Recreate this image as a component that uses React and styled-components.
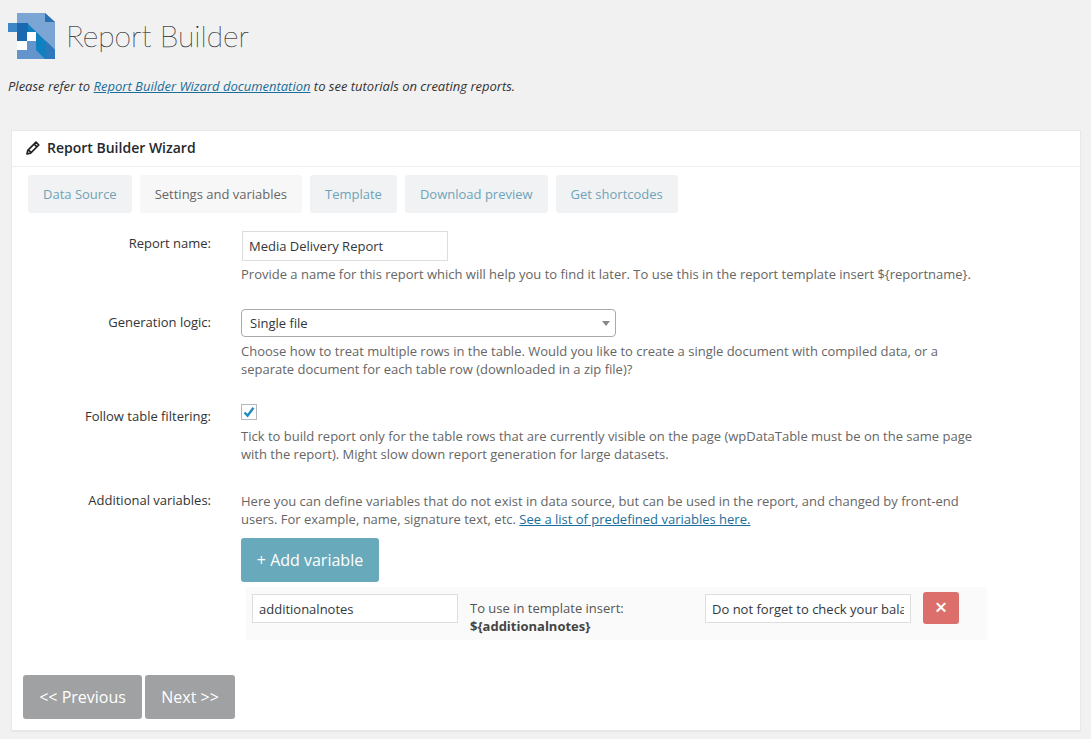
import React from 'react';
import styled, { createGlobalStyle } from 'styled-components';

const GlobalStyle = createGlobalStyle`
  html, body {
    margin: 0;
    padding: 0;
    background: #f1f1f1;
    font-family: 'Open Sans', 'Liberation Sans', sans-serif;
    font-size: 13px;
    color: #444;
  }
`;

const tabs = ['Data Source', 'Settings and variables', 'Template', 'Download preview', 'Get shortcodes'];

const Logo = () => (
  <svg width="48" height="48" viewBox="0 0 48 48">
    <polygon points="9,0 37,0 47,9 47,46 9,46" fill="#7aa5d4" />
    <polygon points="37,0 47,9 37,9" fill="#2a70b5" />
    <polygon points="9,28 19,28 28,28 47,46 9,46" fill="#6394cc" />
    <polygon points="19,10 47,37 47,46 37,46 28,37 28,19 19,19" fill="#0f80c0" />
    <polygon points="38,28 47,37 47,46 38,46" fill="#2c78ba" />
    <rect x="0" y="10" width="10" height="9" fill="#3f86c6" />
    <rect x="9" y="10" width="11" height="18" fill="#1c68b0" />
    <rect x="19" y="19" width="9" height="9" fill="#ffffff" />
    <rect x="9" y="28" width="10" height="9" fill="#ffffff" />
  </svg>
);

const Pencil = () => (
  <svg width="14" height="14" viewBox="0 0 14 14">
    <path
      d="M10 1.2 12.8 4 4.6 12.2 1 13l.8-3.6zM8.7 3.6l1.7 1.7M3 9.4l1.6 1.6"
      fill="none"
      stroke="#222"
      strokeWidth="1.7"
      strokeLinejoin="round"
    />
  </svg>
);

const App = () => (
  <Page>
    <GlobalStyle />
    <Header>
      <Logo />
      <Title>Report Builder</Title>
    </Header>
    <Intro>
      Please refer to <IntroLink href="#">Report Builder Wizard documentation</IntroLink> to see tutorials on creating reports.
    </Intro>
    <Panel>
      <PanelHeader>
        <Pencil />
        <PanelTitle>Report Builder Wizard</PanelTitle>
      </PanelHeader>
      <TabBar>
        {tabs.map((t, i) => (
          <Tab key={t} $active={i === 1}>{t}</Tab>
        ))}
      </TabBar>
      <Form>
        <Row $height={78}>
          <Label $offset={3}>Report name:</Label>
          <Field>
            <NameInput defaultValue="Media Delivery Report" />
            <Help $top={4}>
              Provide a name for this report which will help you to find it later. To use this in the report template insert ${'{'}reportname{'}'}.
            </Help>
          </Field>
        </Row>
        <Row $height={91}>
          <Label $offset={4}>Generation logic:</Label>
          <Field>
            <SelectWrap>
              <Select defaultValue="Single file">
                <option>Single file</option>
              </Select>
              <Arrow />
            </SelectWrap>
            <Help $top={5}>
              Choose how to treat multiple rows in the table. Would you like to create a single document with compiled data, or a separate document for each table row (downloaded in a zip file)?
            </Help>
          </Field>
        </Row>
        <Row $height={92}>
          <Label $offset={7}>Follow table filtering:</Label>
          <Field>
            <CheckBox>
              <svg width="14" height="14" viewBox="0 0 14 14">
                <path d="M2.5 7.5 5.6 10.6 11.5 2.8" fill="none" stroke="#1e8cbe" strokeWidth="2.4" />
              </svg>
            </CheckBox>
            <Help $top={7}>
              Tick to build report only for the table rows that are currently visible on the page (wpDataTable must be on the same page with the report). Might slow down report generation for large datasets.
            </Help>
          </Field>
        </Row>
        <Row>
          <Label $offset={-1}>Additional variables:</Label>
          <Field>
            <Help $top={0}>
              Here you can define variables that do not exist in data source, but can be used in the report, and changed by front-end users. For example, name, signature text, etc. <HelpLink href="#">See a list of predefined variables here.</HelpLink>
            </Help>
            <AddButton>+ Add variable</AddButton>
            <VariableRow>
              <VarInput defaultValue="additionalnotes" />
              <InsertNote>
                To use in template insert:
                <br />
                <strong>${'{'}additionalnotes{'}'}</strong>
              </InsertNote>
              <VarInput defaultValue="Do not forget to check your balance" />
              <RemoveButton>×</RemoveButton>
            </VariableRow>
          </Field>
        </Row>
      </Form>
      <Footer>
        <NavButton>&lt;&lt; Previous</NavButton>
        <NavButton>Next &gt;&gt;</NavButton>
      </Footer>
    </Panel>
  </Page>
);

export default App;

const Page = styled.div`
  height: 739px;
  overflow: hidden;
  box-sizing: border-box;
  padding-top: 13px;
`;

const Header = styled.div`
  display: flex;
  align-items: center;
  gap: 10px;
  height: 48px;
  padding-left: 8px;
`;

const Title = styled.h1`
  margin: 0 0 3px;
  font-family: 'Lato', sans-serif;
  font-weight: 100;
  font-size: 30px;
  line-height: 45px;
  color: #000;
  -webkit-text-stroke: 0.25px #333;
`;

const Intro = styled.p`
  margin: 16px 0 0 8px;
  font-style: italic;
  font-size: 13px;
  line-height: 18px;
  color: #333;
`;

const IntroLink = styled.a`
  color: #1a6e9b;
`;

const Panel = styled.div`
  margin: 35px 10px 0 11px;
  height: 601px;
  box-sizing: border-box;
  background: #fff;
  border: 1px solid #e8e8e8;
  box-shadow: 0 1px 1px rgba(0, 0, 0, 0.04);
`;

const PanelHeader = styled.div`
  display: flex;
  align-items: center;
  gap: 7px;
  height: 33px;
  padding: 0 0 2px 14px;
  border-bottom: 1px solid #eee;
`;

const PanelTitle = styled.h2`
  margin: 0;
  font-size: 14px;
  font-weight: 600;
  color: #23282d;
`;

const TabBar = styled.div`
  display: flex;
  gap: 8px;
  margin-top: 8px;
  padding-left: 16px;
`;

const Tab = styled.div`
  height: 38px;
  padding: 0 15px;
  display: flex;
  align-items: center;
  border-radius: 3px;
  font-size: 13px;
  background: ${p => (p.$active ? '#f7f7f7' : '#f1f2f3')};
  color: ${p => (p.$active ? '#666' : '#6fa3b8')};
`;

const Form = styled.div`
  margin-top: 18px;
`;

const Row = styled.div`
  display: grid;
  grid-template-columns: 199px 1fr;
  column-gap: 30px;
  height: ${p => (p.$height ? `${p.$height}px` : 'auto')};
`;

const Label = styled.label`
  text-align: right;
  font-size: 13px;
  line-height: 18px;
  color: #333;
  margin-top: ${p => p.$offset}px;
`;

const Field = styled.div`
  width: 740px;
`;

const Help = styled.p`
  margin: ${p => p.$top}px 0 0;
  font-size: 13px;
  line-height: 18px;
  color: #666;
`;

const HelpLink = styled.a`
  color: #1a6e9b;
`;

const BaseInput = styled.input`
  box-sizing: border-box;
  font-family: inherit;
  font-size: 13px;
  color: #32373c;
  background: #fff;
  border: 1px solid #ddd;
  padding: 0 6px;
  outline: none;
`;

const NameInput = styled(BaseInput)`
  display: block;
  width: 206px;
  height: 30px;
  margin-left: 1px;
`;

const SelectWrap = styled.div`
  position: relative;
  width: 375px;
`;

const Select = styled.select`
  display: block;
  width: 100%;
  height: 28px;
  box-sizing: border-box;
  appearance: none;
  font-family: inherit;
  font-size: 13px;
  color: #32373c;
  background: #fff;
  border: 1px solid #aaa;
  border-radius: 4px;
  padding: 0 8px;
`;

const Arrow = styled.span`
  position: absolute;
  right: 6px;
  top: 12px;
  border-left: 4px solid transparent;
  border-right: 4px solid transparent;
  border-top: 5px solid #888;
`;

const CheckBox = styled.div`
  width: 16px;
  height: 16px;
  box-sizing: border-box;
  border: 1px solid #b4b9be;
  background: #fff;
  display: flex;
  align-items: center;
  justify-content: center;
  margin-top: 4px;
`;

const AddButton = styled.button`
  display: block;
  width: 138px;
  height: 44px;
  margin-top: 10px;
  border: none;
  border-radius: 3px;
  background: #68a9bc;
  color: #fff;
  font-family: inherit;
  font-size: 16px;
  padding: 0;
`;

const VariableRow = styled.div`
  display: flex;
  align-items: flex-start;
  margin: 5px 0 0 5px;
  width: 741px;
  height: 53px;
  box-sizing: border-box;
  padding: 7px 0 0 6px;
  background: #fafafa;
`;

const VarInput = styled(BaseInput)`
  width: 206px;
  height: 29px;
  padding: 0 6px;
  flex: none;
`;

const InsertNote = styled.div`
  width: 247px;
  margin-top: 5px;
  padding-left: 12px;
  box-sizing: border-box;
  font-size: 13px;
  line-height: 18px;
  color: #555;
  & strong {
    color: #444;
  }
`;

const RemoveButton = styled.button`
  width: 36px;
  height: 32px;
  margin: -2px 0 0 12px;
  border: none;
  border-radius: 3px;
  background: #dc6e6b;
  color: #fff;
  font-family: inherit;
  font-size: 22px;
  font-weight: 600;
  line-height: 26px;
  padding: 0 0 4px;
`;

const Footer = styled.div`
  display: flex;
  gap: 3px;
  margin-top: 35px;
  padding-left: 11px;
`;

const NavButton = styled.button`
  height: 44px;
  padding: 0 16.2px;
  border: none;
  border-radius: 3px;
  background: #a0a1a3;
  color: #fff;
  font-family: inherit;
  font-size: 16px;
`;
